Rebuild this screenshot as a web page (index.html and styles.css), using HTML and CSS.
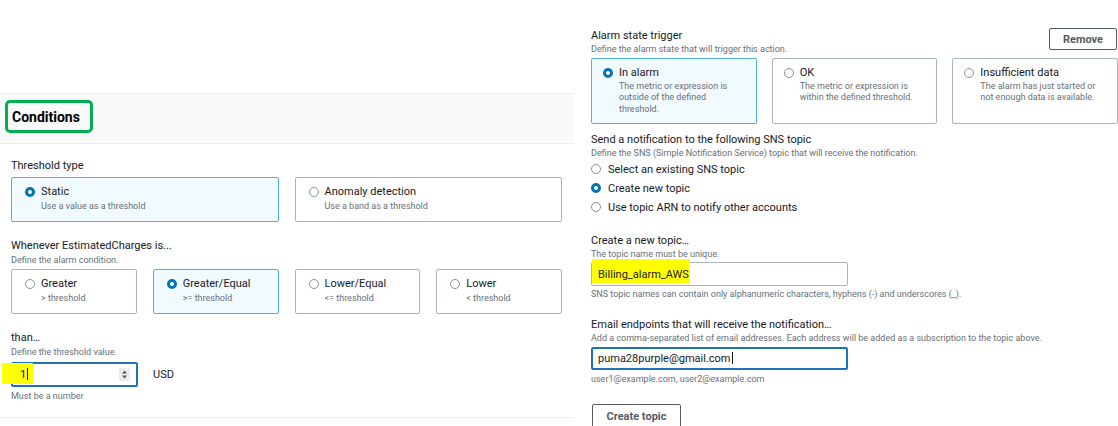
FILE: index.html
```html
<!DOCTYPE html>
<html lang="en">
<head>
<meta charset="utf-8">
<title>Create alarm</title>
<link rel="stylesheet" href="styles.css">
</head>
<body>
<main class="page">
  <section class="panel conditions">
    <div class="panel-header">
      <h2 class="panel-title"><span class="annot-box">Conditions</span></h2>
    </div>
    <div class="panel-body">
      <div class="field first">
        <div class="label">Threshold type</div>
        <div class="tiles tiles-2">
          <div class="tile selected">
            <span class="radio checked"></span>
            <div class="tile-text">
              <div class="tile-title">Static</div>
              <div class="tile-desc">Use a value as a threshold</div>
            </div>
          </div>
          <div class="tile">
            <span class="radio"></span>
            <div class="tile-text">
              <div class="tile-title">Anomaly detection</div>
              <div class="tile-desc">Use a band as a threshold</div>
            </div>
          </div>
        </div>
      </div>

      <div class="field">
        <div class="label">Whenever EstimatedCharges is...</div>
        <div class="desc">Define the alarm condition.</div>
        <div class="tiles tiles-4">
          <div class="tile">
            <span class="radio"></span>
            <div class="tile-text">
              <div class="tile-title">Greater</div>
              <div class="tile-desc">&gt; threshold</div>
            </div>
          </div>
          <div class="tile selected">
            <span class="radio checked"></span>
            <div class="tile-text">
              <div class="tile-title">Greater/Equal</div>
              <div class="tile-desc">&gt;= threshold</div>
            </div>
          </div>
          <div class="tile">
            <span class="radio"></span>
            <div class="tile-text">
              <div class="tile-title">Lower/Equal</div>
              <div class="tile-desc">&lt;= threshold</div>
            </div>
          </div>
          <div class="tile">
            <span class="radio"></span>
            <div class="tile-text">
              <div class="tile-title">Lower</div>
              <div class="tile-desc">&lt; threshold</div>
            </div>
          </div>
        </div>
      </div>

      <div class="field">
        <div class="label">than…</div>
        <div class="desc">Define the threshold value.</div>
        <div class="input-row">
          <div class="input number focused">
            <span class="hl hl-number"></span>
            <span class="value">1<span class="caret"></span></span>
            <svg class="spinner" width="11" height="13" viewBox="0 0 11 13" aria-hidden="true">
              <rect width="11" height="13" rx="1" fill="#ececec"/>
              <path d="M5.5 2.6 L8 5.6 H3 Z" fill="#545b64"/>
              <path d="M5.5 10.4 L8 7.4 H3 Z" fill="#545b64"/>
            </svg>
          </div>
          <span class="unit">USD</span>
        </div>
        <div class="hint">Must be a number</div>
      </div>
    </div>
  </section>

  <section class="panel actions">
    <div class="head-row">
      <div>
        <div class="label">Alarm state trigger</div>
        <div class="desc">Define the alarm state that will trigger this action.</div>
      </div>
      <button class="btn btn-remove" type="button">Remove</button>
    </div>
    <div class="tiles tiles-3">
      <div class="tile tall selected">
        <span class="radio checked"></span>
        <div class="tile-text">
          <div class="tile-title">In alarm</div>
          <div class="tile-desc">The metric or expression is<br>outside of the defined<br>threshold.</div>
        </div>
      </div>
      <div class="tile tall">
        <span class="radio"></span>
        <div class="tile-text">
          <div class="tile-title">OK</div>
          <div class="tile-desc">The metric or expression is<br>within the defined threshold.</div>
        </div>
      </div>
      <div class="tile tall">
        <span class="radio"></span>
        <div class="tile-text">
          <div class="tile-title">Insufficient data</div>
          <div class="tile-desc">The alarm has just started or<br>not enough data is available.</div>
        </div>
      </div>
    </div>

    <div class="field sns">
      <div class="label">Send a notification to the following SNS topic</div>
      <div class="desc">Define the SNS (Simple Notification Service) topic that will receive the notification.</div>
      <ul class="radio-list">
        <li><span class="radio"></span>Select an existing SNS topic</li>
        <li><span class="radio checked"></span>Create new topic</li>
        <li><span class="radio"></span>Use topic ARN to notify other accounts</li>
      </ul>
    </div>

    <div class="field topic">
      <div class="label">Create a new topic…</div>
      <div class="desc">The topic name must be unique.</div>
      <div class="input text-input">
        <span class="hl hl-topic"></span>
        <span class="value">Billing_alarm_AWS</span>
      </div>
      <div class="hint">SNS topic names can contain only alphanumeric characters, hyphens (-) and underscores (_).</div>
    </div>

    <div class="field email">
      <div class="label">Email endpoints that will receive the notification…</div>
      <div class="desc">Add a comma-separated list of email addresses. Each address will be added as a subscription to the topic above.</div>
      <div class="input text-input focused">
        <span class="value">puma28purple@gmail.com<span class="caret"></span></span>
      </div>
      <div class="hint">user1@example.com, user2@example.com</div>
    </div>

    <button class="btn btn-create" type="button">Create topic</button>
  </section>
</main>
</body>
</html>
```

FILE: styles.css
```css
* { box-sizing: border-box; }

html, body {
  margin: 0;
  padding: 0;
  background: #ffffff;
}

body {
  width: 1118px;
  height: 426px;
  overflow: hidden;
  font-family: Roboto, "Liberation Sans", Arial, sans-serif;
  color: #16191f;
  font-size: 11px;
}

.page {
  display: flex;
  gap: 17px;
  height: 426px;
}

/* ---------- left panel ---------- */
.conditions {
  width: 574px;
  flex: none;
  padding-top: 93px;
}

.panel-header {
  height: 51px;
  background: #fafafa;
  border-top: 1px solid #eaeded;
  border-bottom: 1px solid #eaeded;
  padding: 6px 0 0 5px;
}

.panel-title {
  margin: 0;
  font-size: 14px;
  font-weight: 700;
  line-height: 18px;
}

.annot-box {
  display: inline-block;
  border: 3px solid #00b050;
  border-radius: 5px;
  padding: 5px 10px 4px 4px;
  color: #000;
}

.panel-body {
  padding: 14px 12px 14px 11px;
  border-bottom: 1px solid #eaeded;
}

.field { margin-top: 16px; }
.field.first { margin-top: 0; }

.label {
  font-size: 11px;
  line-height: 15px;
  color: #16191f;
  white-space: nowrap;
}

.desc, .hint {
  font-size: 9px;
  line-height: 13px;
  color: #687078;
  white-space: nowrap;
}

.conditions .field:not(.first) .desc { line-height: 14px; }

.field.first .label { margin-bottom: 4px; }
.field .desc + .tiles { margin-top: 2px; }

/* tiles */
.tiles { display: grid; gap: 16px; }
.tiles-2 { grid-template-columns: 1fr 1fr; }
.tiles-4 { grid-template-columns: repeat(4, 1fr); }
.tiles-3 { grid-template-columns: repeat(3, 1fr); gap: 15px; margin-top: 2px; }

.tile {
  display: flex;
  align-items: flex-start;
  gap: 6px;
  height: 45px;
  border: 1px solid #aab7b8;
  border-radius: 2px;
  padding: 6px 8px 0 13px;
  background: #fff;
  white-space: nowrap;
}

.tile.selected {
  background: #f1faff;
  border-color: #4fb3d9;
}

.tile.tall {
  height: 66px;
  padding-left: 11px;
}

.tile-title {
  font-size: 11px;
  line-height: 16px;
  color: #16191f;
}

.tile.tall .tile-title { line-height: 15px; }

.tile-desc {
  font-size: 9px;
  line-height: 13px;
  color: #687078;
}

.tile.tall .tile-desc { line-height: 11.5px; margin-top: 0.5px; }

/* radio */
.radio {
  flex: none;
  width: 10px;
  height: 10px;
  border-radius: 50%;
  border: 1px solid #879596;
  background: #fff;
  margin-top: 3px;
}

.tile.tall .radio { margin-top: 2.5px; }

.radio.checked {
  border: 3px solid #0073bb;
}

/* inputs */
.input-row {
  display: flex;
  align-items: center;
  gap: 15px;
  margin-top: 3px;
}

.input {
  position: relative;
  display: flex;
  align-items: center;
  border: 1px solid #aab7b8;
  border-radius: 2px;
  background: #fff;
  font-size: 11px;
  color: #16191f;
}

.input.focused {
  border: 2px solid #1f73b7;
}

.input.number {
  width: 127px;
  height: 25px;
  justify-content: space-between;
  padding: 0 6px 0 7px;
}

.value { position: relative; }

.caret {
  display: inline-block;
  width: 1px;
  height: 12px;
  background: #16191f;
  vertical-align: -2px;
  margin-left: 1px;
}

.spinner { position: relative; flex: none; }

.unit { font-size: 11px; color: #16191f; }

.input-row + .hint { margin-top: 3px; }

/* annotation highlights laid over the fields */
.hl {
  position: absolute;
  background: #ffff00;
}

.hl-number { left: -11px; top: -1px; width: 31px; height: 21px; }
.hl-topic { left: 0; top: -4px; width: 98px; height: 24px; }

/* ---------- right panel ---------- */
.actions {
  flex: 1;
  padding-top: 28px;
}

.head-row {
  display: flex;
  justify-content: space-between;
  align-items: flex-start;
}

.btn {
  font-family: inherit;
  font-size: 11px;
  font-weight: 700;
  color: #545b64;
  background: #fff;
  border: 1px solid #545b64;
  border-radius: 2px;
  padding: 0;
}

.btn-remove {
  width: 68px;
  height: 22px;
  margin-right: 1px;
}

.field.sns { margin-top: 7.5px; }

.radio-list {
  list-style: none;
  margin: 0;
  padding: 0;
}

.radio-list li {
  display: flex;
  align-items: center;
  gap: 7px;
  height: 19px;
  font-size: 11px;
  color: #16191f;
}

.radio-list .radio { margin-top: 0; }

.field.topic { margin-top: 16px; }
.field.email { margin-top: 15.5px; }

.text-input {
  width: 257px;
  margin-top: 1.5px;
  padding: 0 6px;
}

.field.topic .text-input { height: 24px; }
.field.email .text-input { height: 23px; margin-top: 2.5px; padding-left: 5px; }

.text-input + .hint { margin-top: 2px; }
.field.email .text-input + .hint { margin-top: 2.5px; }

.btn-create {
  display: block;
  width: 89px;
  height: 24px;
  margin-top: 18.5px;
  margin-left: 1px;
}
```
